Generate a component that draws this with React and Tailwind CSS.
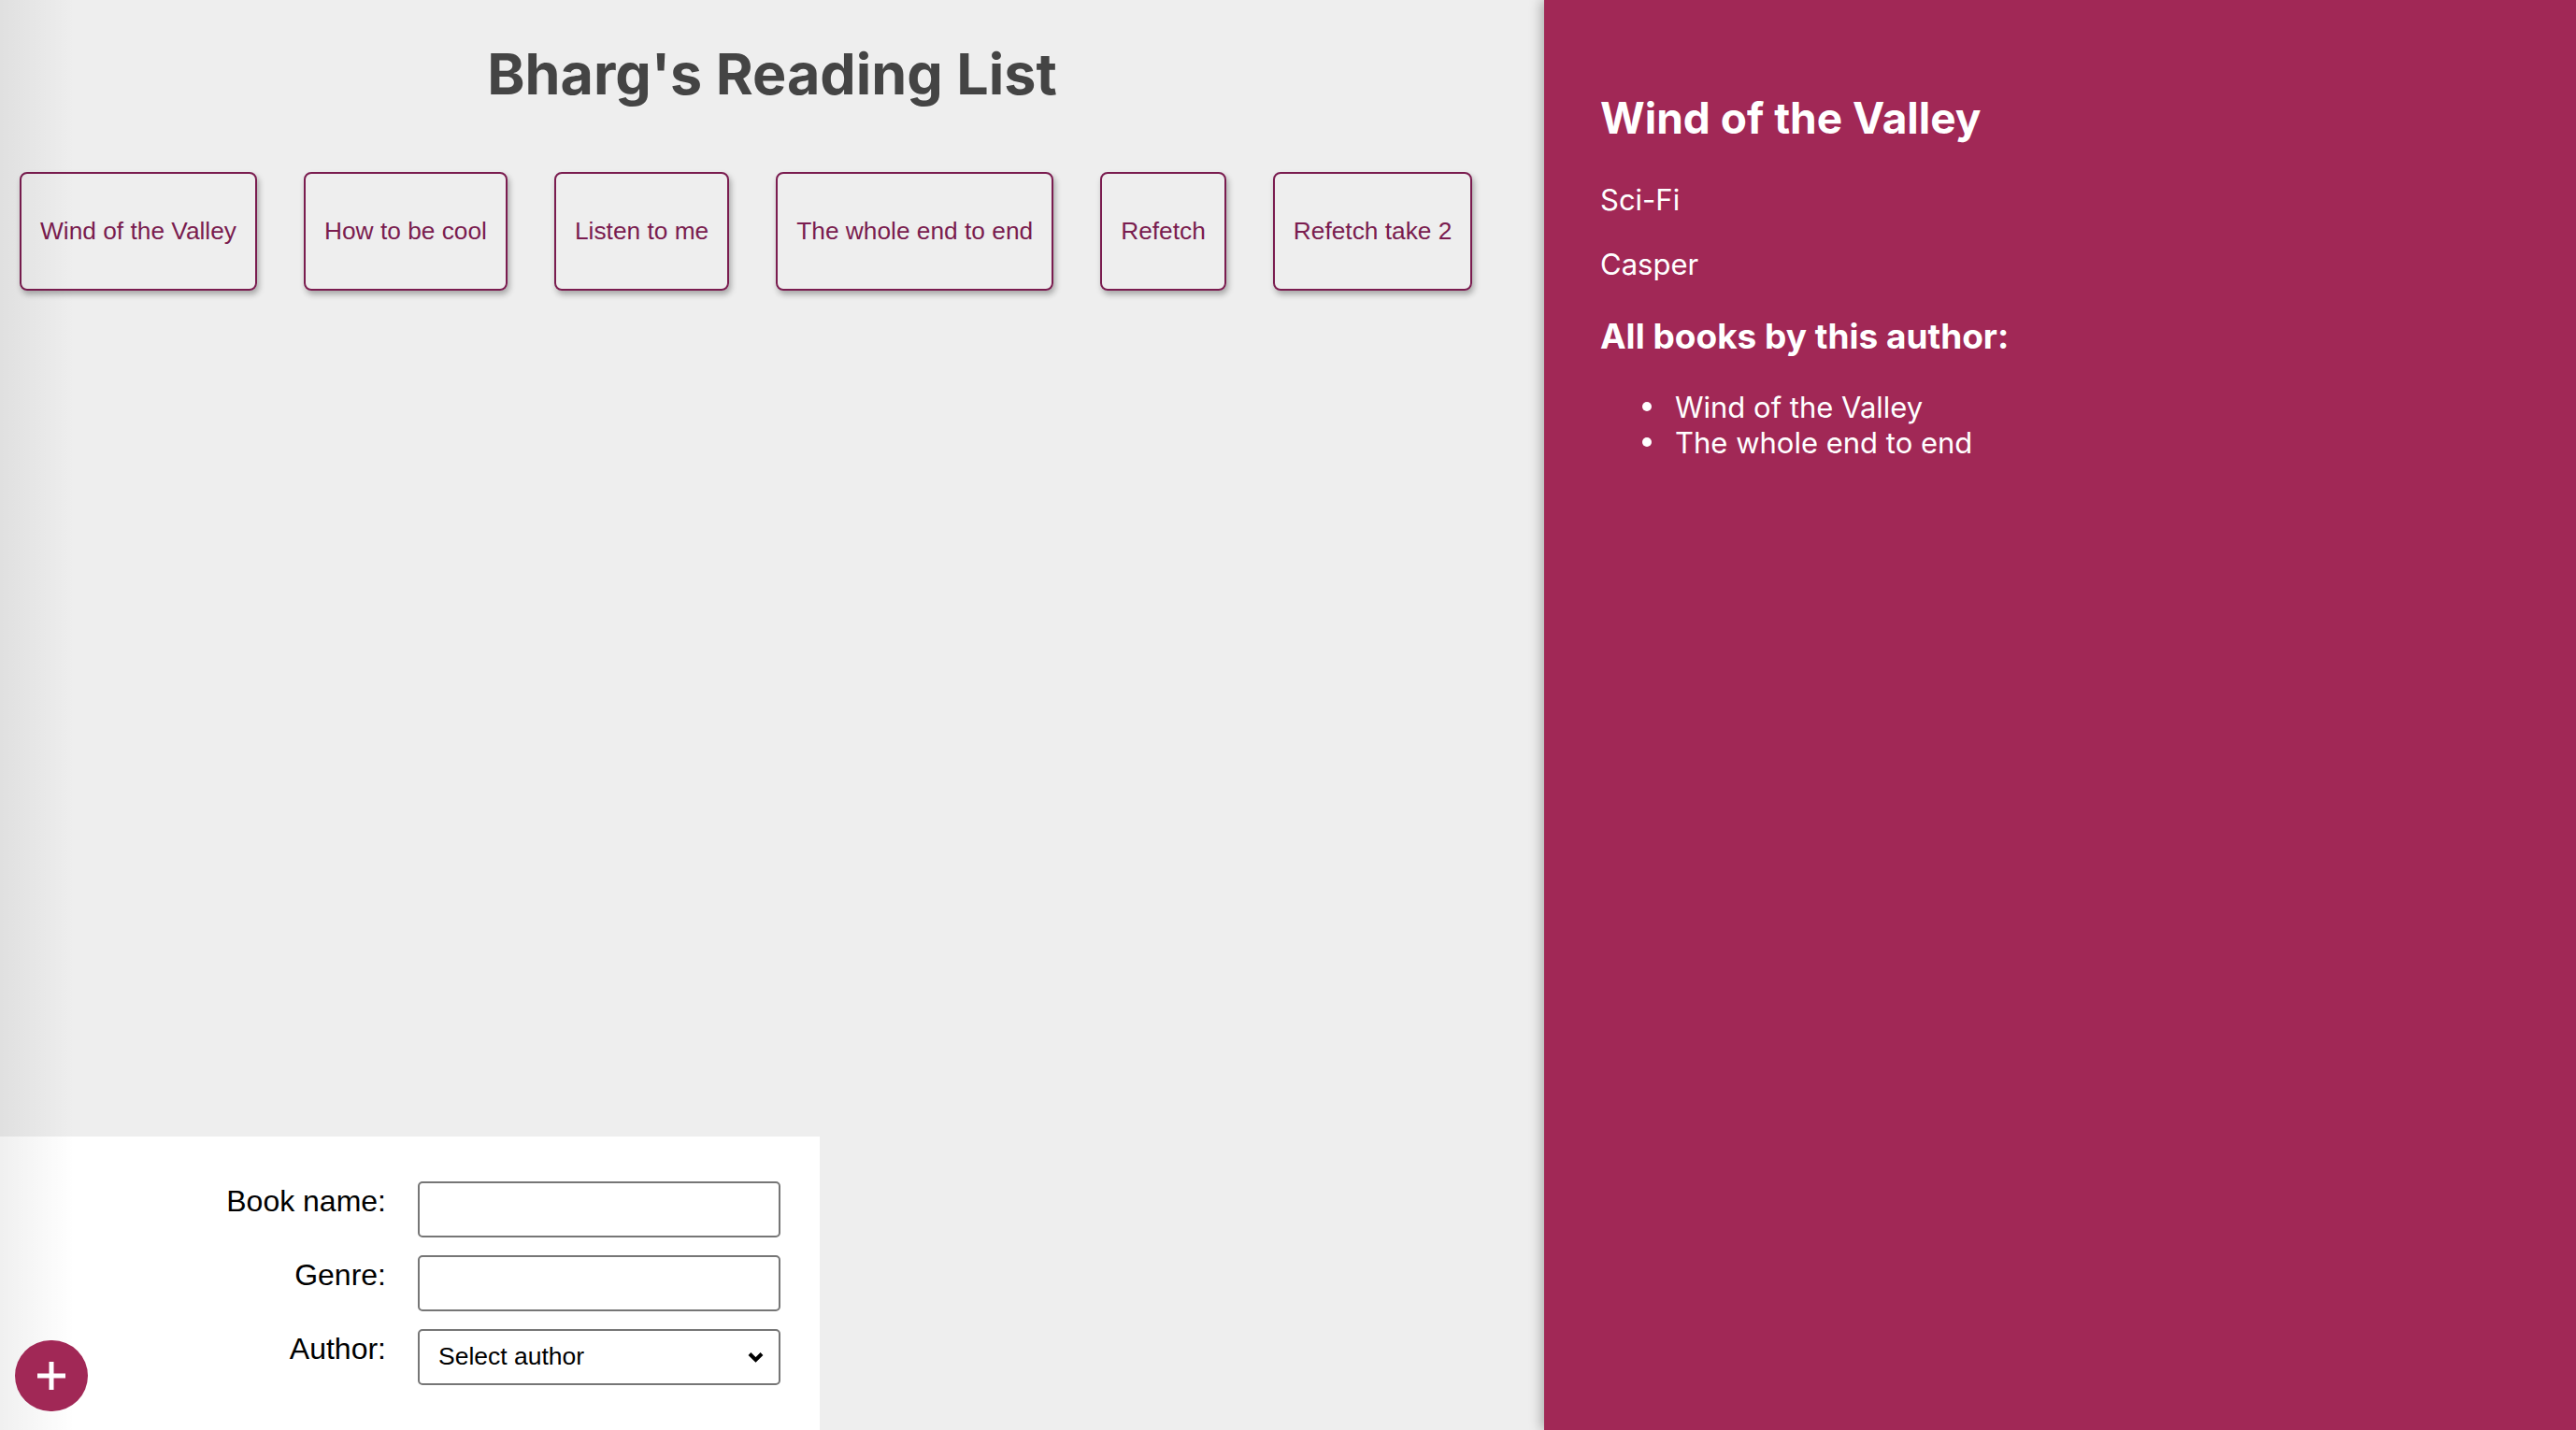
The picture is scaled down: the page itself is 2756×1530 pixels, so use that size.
import React from 'react'
import { useState } from "react";

const books = [
    { name: "Wind of the Valley", genre: "Sci-Fi", author: "Casper" },
    { name: "How to be cool", genre: "Self-help", author: "Jasper" },
    { name: "Listen to me", genre: "Drama", author: "Jasper" },
    { name: "The whole end to end", genre: "Sci-Fi", author: "Casper" },
    { name: "Refetch", genre: "Tech", author: "Bharg" },
    { name: "Refetch take 2", genre: "Tech", author: "Bharg" },
];

function BookDetails({ book }) {
    const byAuthor = books.filter((b) => b.author === book.author);

    return (
        <aside className="relative z-10 h-full w-[1104px] shrink-0 bg-[#a12856] pl-[60px] pt-[99px] text-white shadow-[-3px_0_12px_rgba(0,0,0,0.28)] font-['Inter',sans-serif]">
            <h2 className="text-[46px] font-bold leading-[1.21]">{book.name}</h2>
            <p className="mt-[40px] text-[31px] leading-[1.21]">{book.genre}</p>
            <p className="mt-[32px] text-[31px] leading-[1.21]">{book.author}</p>
            <h3 className="mt-[36px] text-[37px] font-bold leading-[1.21]">All books by this author:</h3>
            <ul className="mt-[35px] pl-[80px] text-[31px] leading-[1.21]">
                {byAuthor.map((b) => (
                    <li key={b.name} className="relative">
                        <span className="absolute left-[-35px] top-[13px] h-[10px] w-[10px] rounded-full bg-white" />
                        {b.name}
                    </li>
                ))}
            </ul>
        </aside>
    )
}

function AddBook() {
    const [name, setName] = useState("");
    const [genre, setGenre] = useState("");
    const [author, setAuthor] = useState("");

    return (
        <form className="mt-auto h-[314px] w-[877px] bg-white pt-[48px] font-['Liberation_Sans',Arial,sans-serif]">
            <div className="grid grid-cols-[413px_388px] gap-x-[34px] gap-y-[19px]">
                <label className="pt-[3px] text-right text-[32px] leading-[1.15] text-black">Book name:</label>
                <input
                    type="text"
                    value={name}
                    onChange={(e) => setName(e.target.value)}
                    className="h-[60px] rounded-[5px] border-2 border-[#767676] bg-white px-[18px] text-[26px]"
                />

                <label className="pt-[3px] text-right text-[32px] leading-[1.15] text-black">Genre:</label>
                <input
                    type="text"
                    value={genre}
                    onChange={(e) => setGenre(e.target.value)}
                    className="h-[60px] rounded-[5px] border-2 border-[#767676] bg-white px-[18px] text-[26px]"
                />

                <label className="pt-[3px] text-right text-[32px] leading-[1.15] text-black">Author:</label>
                <div className="relative">
                    <select
                        value={author}
                        onChange={(e) => setAuthor(e.target.value)}
                        className="h-[60px] w-full appearance-none rounded-[5px] border-2 border-[#767676] bg-white pl-[20px] text-[26.5px] text-black"
                    >
                        <option value="">Select author</option>
                        <option value="Casper">Casper</option>
                        <option value="Jasper">Jasper</option>
                    </select>
                    <svg className="pointer-events-none absolute right-[18px] top-[24px]" width="17" height="12" viewBox="0 0 17 12">
                        <path d="M2 2.5 L8.5 9 L15 2.5" fill="none" stroke="#000" strokeWidth="4" />
                    </svg>
                </div>
            </div>
        </form>
    )
}

function App() {
    const [selected, setSelected] = useState(books[0]);

    return (
        <div className="relative flex h-screen w-full overflow-hidden bg-[#eeeeee]">
            <main className="flex flex-1 flex-col">
                <h1 className="pt-[43px] text-center text-[61px] font-bold leading-[1.21] text-[#444444] font-['Inter',sans-serif]">
                    Bharg's Reading List
                </h1>

                <ul className="mt-[67px] flex gap-[50px] pl-[21px] font-['Liberation_Sans',Arial,sans-serif]">
                    {books.map((book) => (
                        <li
                            key={book.name}
                            onClick={() => setSelected(book)}
                            className="flex h-[127px] cursor-pointer items-center rounded-[8px] border-2 border-[#7a1c4f] px-[20px] text-[26.3px] text-[#7a1c4f] shadow-[2px_4px_6px_rgba(0,0,0,0.3)]"
                        >
                            {book.name}
                        </li>
                    ))}
                </ul>

                <AddBook />
            </main>

            <BookDetails book={selected} />

            {/* soft shade along the left edge */}
            <div className="pointer-events-none absolute inset-y-0 left-0 w-[80px] bg-linear-to-r from-black/6 to-transparent" />

            <button className="absolute bottom-[20px] left-[16px] z-20 flex h-[76px] w-[78px] items-center justify-center rounded-full bg-[#a12856]">
                <svg width="32" height="32" viewBox="0 0 32 32">
                    <path d="M16 1 V31 M1 16 H31" stroke="#fff" strokeWidth="5" />
                </svg>
            </button>
        </div>
    )
}

export default App
